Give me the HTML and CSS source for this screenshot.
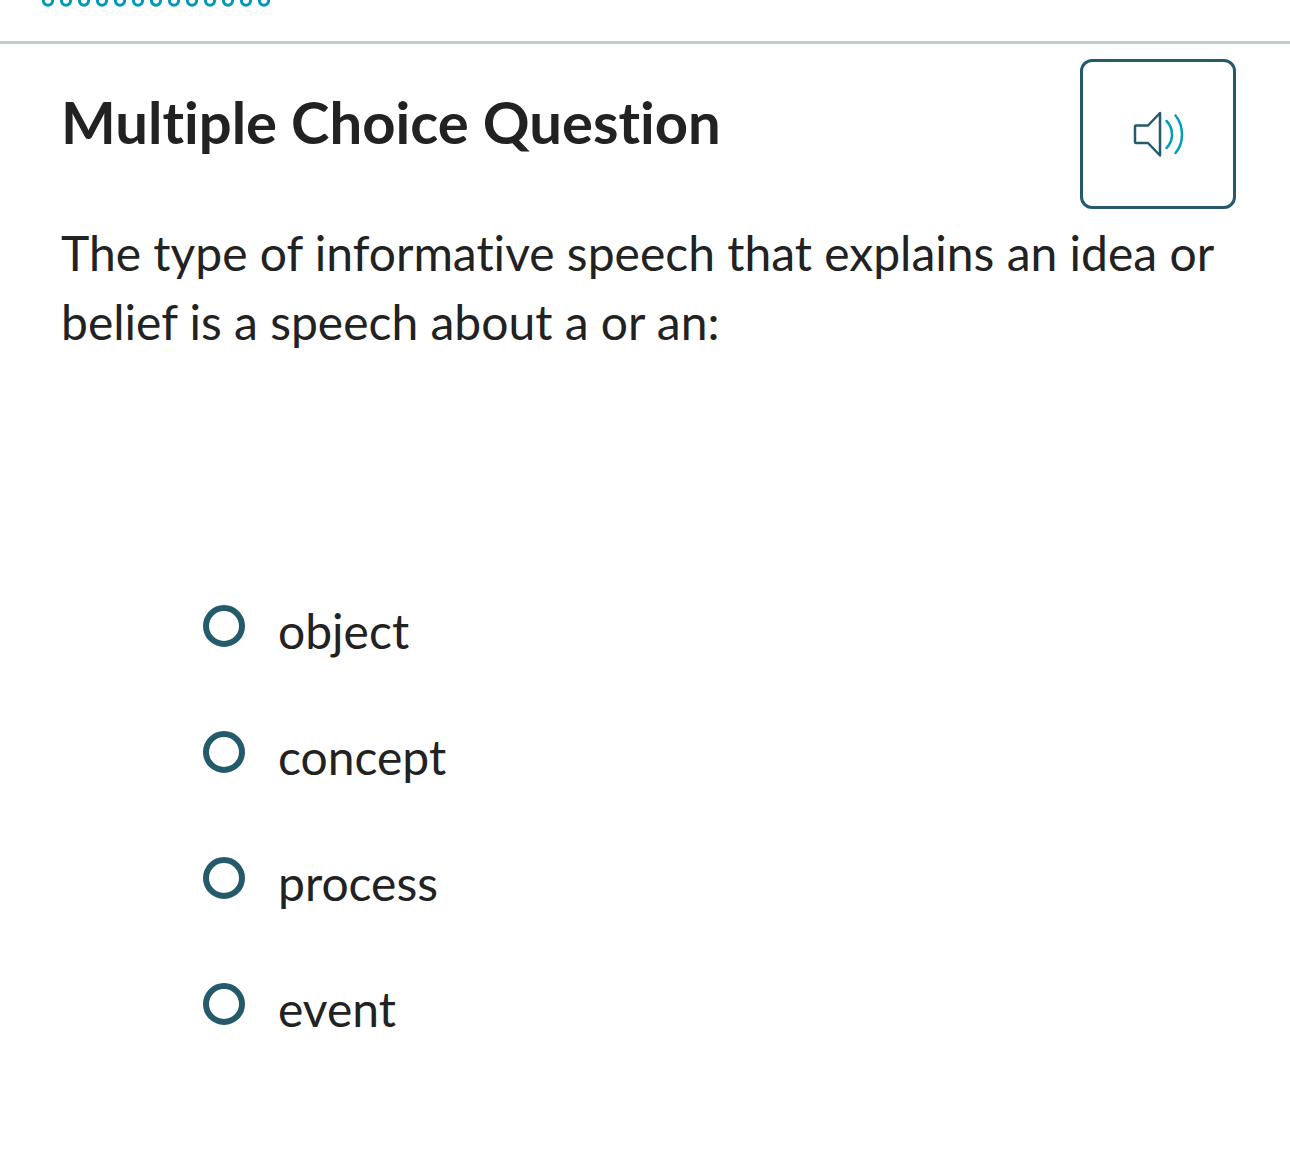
FILE: index.html
```html
<!DOCTYPE html>
<html lang="en">
<head>
<meta charset="utf-8">
<meta name="viewport" content="width=device-width, initial-scale=1">
<title>Multiple Choice Question</title>
<link rel="stylesheet" href="styles.css">
</head>
<body>
<header class="progress">
  <svg class="progress-dots" width="230" height="7" viewBox="0 0 230 7" aria-hidden="true">
    <g fill="none" stroke="#0099b5" stroke-width="3">
      <circle cx="6" cy="0.6" r="4.600"/><circle cx="24" cy="0.6" r="4.600"/><circle cx="42" cy="0.6" r="4.600"/><circle cx="60" cy="0.6" r="4.600"/><circle cx="78" cy="0.6" r="4.600"/><circle cx="96" cy="0.6" r="4.600"/><circle cx="114" cy="0.6" r="4.600"/><circle cx="132" cy="0.6" r="4.600"/><circle cx="150" cy="0.6" r="4.600"/><circle cx="168" cy="0.6" r="4.600"/><circle cx="186" cy="0.6" r="4.600"/><circle cx="204" cy="0.6" r="4.600"/><circle cx="222" cy="0.6" r="4.600"/>
    </g>
  </svg>
</header>
<main class="question">
  <div class="question-head">
    <h1 class="title">Multiple Choice Question</h1>
    <button class="listen" type="button" aria-label="Read aloud">
      <svg width="54" height="48" viewBox="0 0 54 48" fill="none" stroke-width="2.5" stroke-linecap="round" stroke-linejoin="round" aria-hidden="true">
        <path stroke="#255a6a" d="M5 15.500H17L29 3V45.500L17 33H5Q4 33 4 32V16.500Q4 15.500 5 15.500Z"/>
        <path stroke="#009fb7" d="M35.500 11Q41 16.500 41 24.500T35.500 38M44.500 5.500Q51 13.500 51 24.500T44.500 43"/>
      </svg>
    </button>
  </div>
  <form>
    <fieldset class="choices">
      <legend class="prompt">The type of informative speech that explains an idea or belief is a speech about a or an:</legend>
      <div class="options">
        <label class="option"><input class="radio" type="radio" name="answer" value="object"><span>object</span></label>
        <label class="option"><input class="radio" type="radio" name="answer" value="concept"><span>concept</span></label>
        <label class="option"><input class="radio" type="radio" name="answer" value="process"><span>process</span></label>
        <label class="option"><input class="radio" type="radio" name="answer" value="event"><span>event</span></label>
      </div>
    </fieldset>
  </form>
</main>
</body>
</html>
```
FILE: styles.css
```css
* {
  box-sizing: border-box;
}

body {
  margin: 0;
  background: #fff;
  color: #222;
  font-family: Lato, "Open Sans", sans-serif;
  font-size: 48px;
  font-variant-ligatures: none;
  line-height: 69px;
}

.progress {
  height: 44px;
  padding-left: 42px;
  border-bottom: 3px solid #c1cdd1;
}

.progress-dots {
  display: block;
}

.question {
  padding: 15px 54px 96px 61px;
}

.question-head {
  display: flex;
  justify-content: space-between;
  align-items: flex-start;
}

.title {
  margin: 27px 0 0;
  font-size: 58px;
  font-weight: 700;
  line-height: 72px;
}

.listen {
  display: flex;
  align-items: center;
  justify-content: center;
  width: 156px;
  height: 150px;
  padding: 0;
  border: 3px solid #255a6a;
  border-radius: 12px;
  background: #fff;
}

.choices {
  min-width: 0;
  margin: 0;
  padding: 0;
  border: 0;
}

.prompt {
  padding: 9px 0 0;
}

.options {
  display: flex;
  flex-direction: column;
  gap: 57px;
  padding: 240px 0 0 142px;
}

.option {
  display: flex;
  align-items: flex-start;
  gap: 33px;
}

.radio {
  appearance: none;
  flex: none;
  width: 42px;
  height: 42px;
  margin: 9px 0 0;
  border: 6px solid #255a6a;
  border-radius: 50%;
  background: #fff;
}

.radio:checked {
  background: #255a6a;
  box-shadow: inset 0 0 0 6px #fff;
}
```
